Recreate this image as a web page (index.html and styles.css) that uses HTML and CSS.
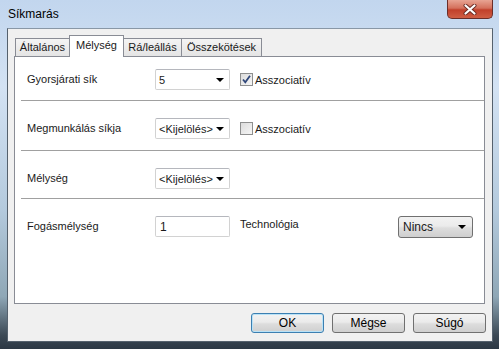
FILE: index.html
```html
<!DOCTYPE html>
<html lang="hu">
<head>
  <meta charset="UTF-8">
  <title>Síkmarás</title>
  <link rel="stylesheet" href="styles.css">
</head>
<body>
  <div class="window">
    <div class="titlebar">
      <span class="title">Síkmarás</span>
      <button class="close">
        <svg width="14" height="11" viewBox="0 0 14 11">
          <path d="M2.5 1.5 L11.5 9.5 M11.5 1.5 L2.5 9.5" stroke="#6b2a22" stroke-width="4" stroke-linecap="round"/>
          <path d="M2.5 1.5 L11.5 9.5 M11.5 1.5 L2.5 9.5" stroke="#ffffff" stroke-width="2.2" stroke-linecap="round"/>
        </svg>
      </button>
    </div>

    <div class="client">
      <div class="tabs">
        <div class="tab t1">Általános</div>
        <div class="tab t2 active">Mélység</div>
        <div class="tab t3">Rá/leállás</div>
        <div class="tab t4">Összekötések</div>
      </div>

      <div class="panel">
        <div class="row first">
          <span class="label">Gyorsjárati sík</span>
          <div class="combo"><span>5</span><i class="arrow"></i></div>
          <div class="check">
            <span class="box">
              <svg width="11" height="11" viewBox="0 0 11 11">
                <path d="M2 5.5 L4.3 8.3 L9 1.8" fill="none" stroke="#30477a" stroke-width="1.8"/>
              </svg>
            </span>
            <span>Asszociatív</span>
          </div>
        </div>

        <div class="row second">
          <span class="label">Megmunkálás síkja</span>
          <div class="combo"><span>&lt;Kijelölés&gt;</span><i class="arrow"></i></div>
          <div class="check">
            <span class="box"></span>
            <span>Asszociatív</span>
          </div>
        </div>

        <div class="row third">
          <span class="label">Mélység</span>
          <div class="combo"><span>&lt;Kijelölés&gt;</span><i class="arrow"></i></div>
        </div>

        <div class="row last">
          <span class="label">Fogásmélység</span>
          <div class="edit">1</div>
          <span class="tech">Technológia</span>
          <div class="dropbtn"><span>Nincs</span><i class="arrow"></i></div>
        </div>
      </div>

      <div class="buttons">
        <button class="btn default">OK</button>
        <button class="btn">Mégse</button>
        <button class="btn">Súgó</button>
      </div>
    </div>
  </div>
</body>
</html>
```

FILE: styles.css
```css
body {
  margin: 0;
  padding: 0;
  font-family: 'Liberation Sans', Arial, sans-serif;
  font-size: 11px;
  color: #1a1a1a;
}

.window {
  width: 499px;
  height: 349px;
  box-sizing: border-box;
  padding: 0 6px 7px 7px;
  display: flex;
  flex-direction: column;
  background: linear-gradient(to bottom, #c2d6ee 0%, #d3e2f3 25%, #b4cadd 60%, #8fa7b6 85%, #3c4955 96%, #2c3844 100%);
}

.titlebar {
  height: 28px;
  display: flex;
  align-items: flex-start;
}

.title {
  font-size: 12px;
  margin-top: 7px;
  margin-left: 1px;
  color: #000;
}

.close {
  margin-left: auto;
  width: 46px;
  height: 19px;
  padding: 0;
  border: 1px solid #6b2e29;
  border-top: none;
  border-radius: 0 0 5px 5px;
  background: linear-gradient(to bottom, #e8a493 0%, #d4705c 45%, #c1402b 55%, #cf5e44 100%);
  display: flex;
  align-items: center;
  justify-content: center;
}

.client {
  flex: 1;
  display: flex;
  flex-direction: column;
  background-color: #f0f0f0;
  border: 1px solid #55616d;
  border-top-color: #8997a6;
  padding: 6px 7px 0 6px;
}

.tabs {
  display: flex;
  align-items: flex-end;
  height: 21px;
  padding-left: 1px;
}

.tab {
  box-sizing: border-box;
  height: 18px;
  border: 1px solid #898c95;
  border-bottom: none;
  background: linear-gradient(to bottom, #f4f4f4, #e4e4e4);
  padding-top: 2px;
  text-align: center;
  margin-left: -1px;
}

.t1 { width: 55px; margin-left: 0; }
.t2 { width: 55px; }
.t3 { width: 59px; }
.t4 { width: 81px; }

.tab.active {
  height: 22px;
  margin-bottom: -1px;
  background: #ffffff;
  position: relative;
  z-index: 1;
  padding-top: 3px;
}

.panel {
  height: 248px;
  box-sizing: border-box;
  background-color: #ffffff;
  border: 1px solid #898c95;
}

.row {
  box-sizing: border-box;
  display: flex;
  align-items: flex-start;
  margin-left: 6px;
  padding-left: 6px;
  padding-top: 17px;
  border-bottom: 1px solid #a0a0a0;
}

.row.first { height: 44px; padding-top: 12px; }
.row.second { height: 50px; }
.row.third { height: 48px; }
.row.last { border-bottom: none; }

.label {
  width: 128px;
  line-height: 21px;
}

.combo, .edit {
  box-sizing: border-box;
  width: 75px;
  height: 21px;
  border: 1px solid #d2d2d2;
  border-top-color: #b5b7bd;
  border-radius: 2px;
  background-color: #ffffff;
  display: flex;
  align-items: center;
  padding: 0 5px 0 3px;
}

.combo span {
  flex: 1;
}

.edit {
  font-size: 12px;
  padding-left: 4px;
}

.arrow {
  width: 0;
  height: 0;
  border-left: 4px solid transparent;
  border-right: 4px solid transparent;
  border-top: 4px solid #000;
}

.check {
  display: flex;
  align-items: center;
  height: 21px;
  margin-left: 10px;
  gap: 2px;
}

.box {
  box-sizing: border-box;
  width: 13px;
  height: 13px;
  border: 1px solid #8e8f8f;
  background: linear-gradient(135deg, #dcdcdc, #f6f6f6);
  display: flex;
  align-items: center;
  justify-content: center;
}

.tech {
  margin-left: 10px;
  line-height: 17px;
}

.dropbtn {
  box-sizing: border-box;
  width: 75px;
  height: 22px;
  margin-left: auto;
  margin-right: 11px;
  border: 1px solid #707070;
  border-radius: 3px;
  background: linear-gradient(to bottom, #f2f2f2 0%, #ebebeb 45%, #dddddd 55%, #cfcfcf 100%);
  display: flex;
  align-items: center;
  padding: 0 6px 0 4px;
  font-size: 12px;
}

.dropbtn span {
  flex: 1;
}

.buttons {
  display: flex;
  justify-content: flex-end;
  gap: 8px;
  margin-top: 9px;
  margin-right: -1px;
}

.btn {
  box-sizing: border-box;
  width: 73px;
  height: 20px;
  padding: 0;
  font-family: inherit;
  font-size: 12px;
  color: #000;
  border: 1px solid #707070;
  border-radius: 3px;
  background: linear-gradient(to bottom, #f2f2f2 0%, #ebebeb 45%, #dddddd 55%, #cfcfcf 100%);
}

.btn.default {
  border-color: #3c7fb1;
  box-shadow: inset 0 0 0 1px #b9e2f7;
}
```
